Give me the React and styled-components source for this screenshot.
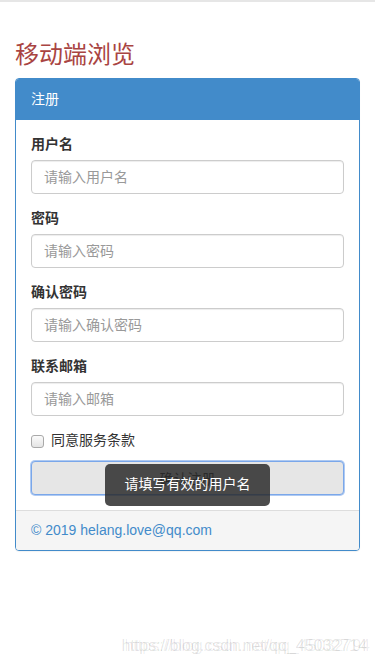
import React from "react";
import styled, { createGlobalStyle } from "styled-components";

const Global = createGlobalStyle`
  html, body { margin: 0; padding: 0; background: #fff; }
  body {
    font-family: "Liberation Sans", "Noto Sans CJK SC", sans-serif;
    font-size: 14px;
    line-height: 1.42857;
    color: #333;
  }
  * { box-sizing: border-box; }
`;

const Page = styled.div`
  position: relative;
  min-height: 668px;
  border-top: 2px solid #e6e6e6;
  padding: 0 15px;
  overflow: hidden;
`;

const Title = styled.h3`
  margin: 40px 0 10px;
  font-size: 24px;
  font-weight: 400;
  line-height: 1.1;
  color: #a94442;
`;

const Panel = styled.div`
  border: 1px solid #428bca;
  border-radius: 4px;
  background: #fff;
  overflow: hidden;
  box-shadow: 0 1px 1px rgba(0, 0, 0, 0.05);
`;

const PanelHeading = styled.div`
  background: #428bca;
  color: #fff;
  padding: 10px 15px;
  font-size: 14px;
  line-height: 21px;
`;

const PanelBody = styled.form`
  padding: 15px;
`;

const FormGroup = styled.div`
  margin-bottom: 15px;
`;

const Label = styled.label`
  display: block;
  margin-bottom: 5px;
  font-weight: 700;
  color: #333;
`;

const Input = styled.input`
  display: block;
  width: 100%;
  height: 34px;
  padding: 6px 12px;
  font-family: inherit;
  font-size: 14px;
  color: #555;
  border: 1px solid #ccc;
  border-radius: 4px;
  box-shadow: inset 0 1px 1px rgba(0, 0, 0, 0.075);
  outline: none;
  &::placeholder { color: #999; }
`;

const CheckRow = styled.label`
  display: flex;
  align-items: center;
  height: 20px;
  margin: 0 0 10px;
  color: #333;
`;

const Check = styled.input`
  appearance: none;
  width: 13px;
  height: 13px;
  margin: 0 7px 0 0;
  border: 1px solid #a9a9a9;
  border-radius: 3px;
  background: linear-gradient(#fbfbfb, #e4e4e4);
`;

const ButtonWrap = styled.div`
  position: relative;
`;

const Button = styled.button`
  display: block;
  width: 100%;
  height: 34px;
  font-family: inherit;
  font-size: 14px;
  color: #333;
  background: #e6e6e6;
  border: 1px solid #7aa7ea;
  border-radius: 4px;
  box-shadow: 0 0 0 1px rgba(122, 167, 234, 0.6);
`;

const Tooltip = styled.div`
  position: absolute;
  left: 74px;
  top: 3px;
  width: 165px;
  height: 42px;
  border-radius: 5px;
  background: rgba(40, 40, 40, 0.83);
  color: #fff;
  font-size: 14px;
  display: flex;
  align-items: center;
  justify-content: center;
`;

const PanelFooter = styled.div`
  background: #f5f5f5;
  border-top: 1px solid #ddd;
  padding: 10px 15px;
  color: #428bca;
  line-height: 19px;
`;

const Watermark = styled.div`
  position: absolute;
  right: 8px;
  bottom: 10px;
  font-size: 16px;
  color: rgba(0, 0, 0, 0.11);
  white-space: nowrap;
  pointer-events: none;
`;

const WatermarkShadow = styled(Watermark)`
  right: 5px;
  color: rgba(0, 0, 0, 0.07);
`;

const fields = [
  { label: "用户名", placeholder: "请输入用户名", type: "text" },
  { label: "密码", placeholder: "请输入密码", type: "password" },
  { label: "确认密码", placeholder: "请输入确认密码", type: "password" },
  { label: "联系邮箱", placeholder: "请输入邮箱", type: "email" },
];

export default function App() {
  return (
    <>
      <Global />
      <Page>
        <Title>移动端浏览</Title>
        <Panel>
          <PanelHeading>注册</PanelHeading>
          <PanelBody onSubmit={(e) => e.preventDefault()}>
            {fields.map((f) => (
              <FormGroup key={f.label}>
                <Label>{f.label}</Label>
                <Input type={f.type} placeholder={f.placeholder} />
              </FormGroup>
            ))}
            <CheckRow>
              <Check type="checkbox" />
              同意服务条款
            </CheckRow>
            <ButtonWrap>
              <Button type="submit">确认注册</Button>
              <Tooltip>请填写有效的用户名</Tooltip>
            </ButtonWrap>
          </PanelBody>
          <PanelFooter>© 2019 helang.love@qq.com</PanelFooter>
        </Panel>
        <WatermarkShadow>https://blog.csdn.net/qq_45032794</WatermarkShadow>
        <Watermark>https://blog.csdn.net/qq_45032714</Watermark>
      </Page>
    </>
  );
}
